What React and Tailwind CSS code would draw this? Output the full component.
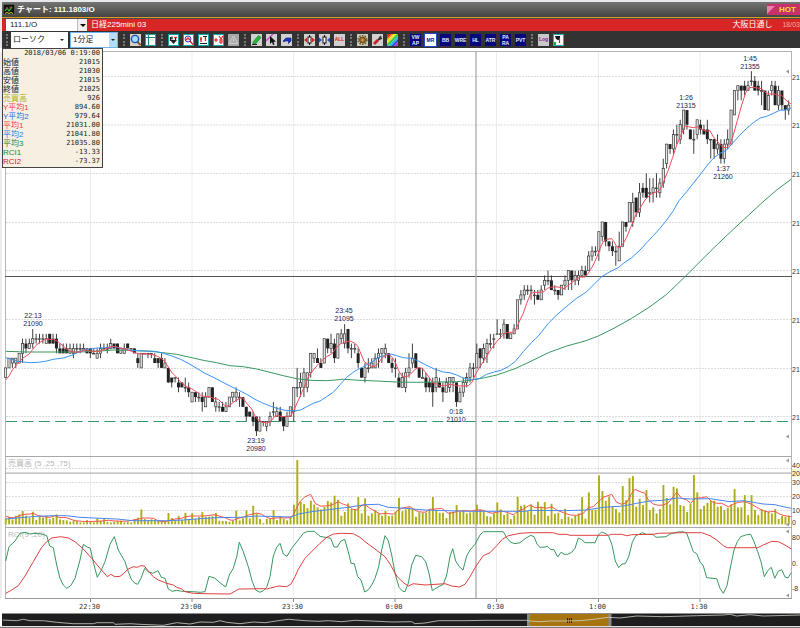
import React, { useState } from "react";
import clsx from "clsx";

// open high low close, one entry per minute, in ticks of 5 yen above 20980
const candles = `12 14 12 14,14 16 14 16,15 16 14 16,15 16 14 16,15 17 15 17,17 20 15 19,19 20 17 18,18 20 18 19,19 22 18 20,20 21 19 20,
20 21 19 20,20 21 19 20,19 21 19 20,21 21 19 19,20 21 19 19,20 21 17 18,18 19 17 17,18 19 17 17,18 19 17 17,17 19 17 18,
17 19 16 18,18 19 17 18,18 19 17 18,18 19 18 18,18 18 17 17,18 18 16 17,17 18 17 17,16 18 16 17,17 19 16 18,18 19 18 18,
18 19 17 18,18 20 18 19,19 19 18 18,19 19 17 17,17 18 17 18,17 19 17 18,19 19 18 18,18 18 18 18,18 18 17 17,16 17 14 15,
14 17 14 17,17 17 17 17,17 17 16 17,17 17 16 17,16 17 15 15,16 16 14 15,16 17 14 14,14 16 14 15,14 14 11 11,12 12 10 11,
12 12 11 12,11 12 9 10,11 11 10 10,10 12 9 10,10 11 8 9,7 9 7 9,9 9 7 8,8 9 7 8,8 9 5 7,6 9 6 8,
8 10 8 10,10 10 7 7,6 8 5 7,6 7 5 6,6 7 5 5,5 7 5 6,6 8 6 8,8 9 7 9,8 10 7 9,8 9 6 8,
8 8 6 6,6 6 3 4,5 5 4 4,4 5 2 3,4 4 0 1,1 4 1 3,3 3 2 3,2 3 1 3,3 5 2 4,5 7 4 5,
4 6 4 5,5 6 3 3,4 4 1 2,2 5 2 4,4 6 4 6,5 10 3 10,10 14 8 10,10 13 8 11,10 14 8 13,10 13 9 13,
13 17 12 17,16 17 15 17,16 18 15 15,15 16 14 14,15 20 15 20,20 20 17 18,18 21 17 19,19 20 15 16,16 21 16 21,20 22 19 21,
19 23 18 21,22 22 17 18,18 19 16 18,18 19 17 18,17 18 14 15,14 14 12 12,12 15 11 14,14 16 13 14,14 16 14 15,14 17 14 16,
16 18 14 17,17 18 15 18,17 19 16 18,17 17 15 15,15 16 13 14,14 16 12 14,12 13 10 10,10 13 10 12,10 14 9 13,13 17 12 14,
15 19 14 16,17 17 14 14,14 14 12 12,12 14 12 12,12 13 9 10,11 12 9 10,11 12 6 9,10 14 9 12,11 12 10 10,10 11 7 9,
9 12 9 11,10 12 9 12,11 12 9 12,11 11 6 7,7 10 7 9,9 12 8 11,11 13 10 12,12 15 11 14,14 15 12 14,14 19 14 17,
18 18 14 16,16 19 15 18,17 20 15 19,19 21 18 19,20 21 18 20,21 24 21 21,21 22 20 21,21 24 20 23,23 23 20 20,20 21 20 21,
21 23 21 22,22 28 22 28,28 30 27 29,29 31 28 30,30 31 29 30,30 31 28 30,29 30 27 29,29 30 28 28,28 31 28 30,31 33 30 32,
32 34 31 32,32 33 30 30,30 31 29 30,30 30 28 29,29 31 29 31,31 33 30 32,32 34 30 34,34 34 30 32,32 34 31 33,32 34 31 33,
33 35 33 34,34 35 33 33,34 38 34 37,37 39 36 38,38 39 37 38,38 42 36 42,41 44 40 44,44 44 39 40,40 40 38 39,39 40 37 38,
38 39 35 38,36 42 36 39,39 44 39 44,44 44 42 43,44 48 44 48,44 50 43 48,49 49 45 46,46 52 45 50,51 52 49 50,51 54 49 49,
50 53 48 50,50 53 48 51,51 54 49 51,50 53 49 52,52 57 51 55,56 60 55 60,60 60 58 59,59 63 58 62,62 64 60 62,61 65 60 64,
63 67 62 67,67 67 63 64,63 63 61 61,61 63 58 61,62 65 61 65,64 65 62 63,63 64 62 62,63 65 60 61,61 61 57 61,61 61 57 59,
59 62 58 60,60 61 56 57,57 61 56 60,60 63 59 61,60 67 60 67,66 71 66 71,71 72 69 72,72 72 69 71,72 73 70 71,71 73 71 72,
73 75 72 73,73 74 71 71,72 73 70 71,71 73 68 71,71 71 67 67,67 71 67 70,71 73 70 72,72 73 68 68,68 72 67 71,71 71 67 68,
68 68 65 67,67 69 66 68`
  .split(",")
  .map((row) => row.trim().split(" ").map(Number));

const volumes = [
  18, 23, 15, 26, 30, 40, 26, 20, 38, 13, 26, 20, 26, 16, 20, 30, 15, 13, 12, 8, 11, 10, 6, 6, 13, 9, 6, 18, 11, 16,
  8, 6, 8, 11, 11, 6, 8, 6, 15, 20, 45, 16, 13, 15, 12, 10, 10, 8, 34, 19, 12, 26, 13, 35, 16, 34, 16, 22, 37, 23,
  23, 24, 34, 11, 10, 10, 8, 11, 41, 12, 18, 42, 18, 56, 33, 16, 4, 17, 16, 43, 13, 24, 16, 12, 23, 59, 193, 68, 61, 49,
  71, 60, 51, 45, 53, 70, 66, 86, 74, 26, 37, 63, 46, 45, 82, 33, 78, 26, 33, 43, 33, 26, 40, 25, 26, 38, 80, 40, 45, 51,
  46, 23, 36, 35, 35, 43, 82, 43, 35, 35, 19, 37, 38, 58, 38, 41, 33, 36, 38, 59, 45, 38, 25, 23, 33, 66, 45, 28, 33, 16,
  27, 83, 56, 59, 40, 60, 29, 68, 53, 67, 26, 62, 32, 35, 16, 47, 23, 18, 26, 33, 82, 17, 96, 43, 44, 147, 100, 71, 84, 53,
  46, 36, 115, 73, 139, 145, 53, 77, 58, 103, 43, 51, 33, 46, 118, 79, 60, 113, 108, 58, 55, 37, 61, 148, 96, 46, 56, 65, 71, 71,
  53, 55, 43, 50, 60, 106, 51, 51, 88, 28, 88, 43, 28, 45, 41, 38, 33, 46, 16, 25, 23, 26,
];

// Line samples: [origin x, origin y, points], three steps to a pixel
const ma5 = [
  [0, 290, "17,270 27,258 37,240 48,227 58,215 68,205 78,198 88,192 98,178 108,166 118,158 128,152 138,147 150,148 160,149 170,152 180,160 190,168 200,178 212,184 225,187 240,185 255,180 270,183 285,184 300,184 315,177 330,171 345,169 360,174 375,177 390,182 405,188 420,192 435,191 450,193 463,195 475,200 490,210 503,228 515,247 530,262 545,280 560,290 575,296 590,306 605,318 618,320 630,321 645,326 655,328 668,341 678,349 690,345 705,333 720,325 728,323 740,340 755,357 765,378 775,390 785,396"],
  [230, 290, "110,399 122,395 133,380 145,376 155,380 170,379 182,378 192,360 203,335 215,308 225,285 238,255 250,240 262,226 275,212 290,200 305,192 315,178 330,162 345,156 360,153 372,158 383,168 393,192 403,215 413,222 425,229 435,229 445,220 455,205 465,197 475,193 485,200 497,220 508,246 518,260 530,260 542,252 553,240 563,233 575,234 585,245 598,263 608,278 620,282 630,287 645,287 660,283 670,285 680,287 700,288 715,287 725,278 738,250 750,230 765,207"],
  [460, 180, "95,505 110,485 125,468 135,459 145,457 160,457 168,448 180,420 190,400 200,370 212,340 225,337 240,337 252,335 262,325 272,322 285,320 300,322 312,326 322,318 335,308 350,297 360,291 375,291 385,280 400,255 412,228 420,205 430,185 440,178 455,176 462,185 470,200 478,203 487,195 500,172 512,142 525,110 540,85 555,60 570,45 580,38 595,35 605,20"],
  [600, 50, "193,390 205,360 218,322 230,285 245,250 255,228 265,230 280,233 292,230 305,238 318,243 330,242 340,260 350,272 360,283 368,292 380,293 390,283 400,255 412,212 425,165 437,128 448,113 460,112 470,114 480,115 490,120 500,131 512,132 525,132 535,136 545,136 555,148 565,156 573,162"],
];
const ma25 = [
  [0, 290, "17,203 35,208 50,213 70,216 90,218 115,217 140,213 160,208 190,204 215,196 240,184 265,178 290,174 315,173 340,170 365,175 385,180 410,182 440,183 465,184 490,190 515,198 540,207 565,220 590,235 615,250 640,262 665,275 690,288 715,300 740,313 765,328 785,338"],
  [230, 290, "118,347 140,355 165,361 190,363 212,360 230,350 250,340 270,333 290,320 310,307 330,284 350,262 375,243 400,230 425,216 450,200 470,194 485,193 500,197 520,203 545,205 565,213 590,226 615,238 640,246 660,248 680,255 700,264 720,268"],
  [460, 180, "48,598 60,595 80,583 100,577 125,570 145,560 165,545 190,515 215,487 235,468 265,430 290,405 325,375 350,355 380,335 400,315 425,290 450,275 475,263 490,250 515,233 540,210 560,188 580,167 600,145 620,120 640,92"],
  [600, 50, "237,452 260,425 280,400 300,375 320,348 340,325 360,310 380,300 400,277 420,255 440,235 460,218 480,204 500,199 520,190 540,181 555,180 573,174"],
];
const ma75 = [
  [0, 290, "17,184 80,186 240,186 300,183 340,180 380,181 410,182 450,184 490,188 530,193 570,202 610,211 650,218"],
  [230, 290, "0,227 40,230 80,237 120,247 160,257 200,266 240,271 290,272 340,268 390,271 440,273 500,276 560,277 620,276 680,275 720,271"],
  [460, 180, "70,594 110,585 165,566 210,545 265,518 320,498 375,483 415,468 465,443 515,415 570,380 620,343 675,290"],
  [600, 50, "300,635 350,585 400,538 495,450 530,420 573,388"],
];
const volumeFast = [
  [0, 450, "17,198 30,203 45,203 60,196 75,193 90,192 100,190 115,197 130,200 150,202 165,197 180,203 195,202 210,207 225,212 245,214 265,215 285,214 305,213 325,211 345,213 365,214 385,213 405,209 420,206 430,204 445,204 460,205 475,213 495,215 510,211 525,207 545,205 555,201 570,198 590,198 610,198 630,196 645,194 660,199 675,203 690,210 700,211 715,205 730,202 745,195 760,192 770,189 785,193"],
  [265, 450, "0,199 15,206 40,203 60,204 75,203 85,195 95,173 105,155 120,140 137,133 150,160 165,168 180,168 200,165 220,155 235,163 250,167 262,177 275,180 290,166 302,165 315,175 330,183 345,192 365,190 385,193 400,180 415,173 435,170 450,180 460,185 480,187 495,178 510,177 530,175 550,190 565,188 580,183 600,182 620,183 635,180 650,180 665,185 680,190 695,187 710,183 725,187 745,194 760,183 775,177"],
  [530, 450, "0,165 15,173 35,172 50,175 65,170 80,180 100,188 120,195 140,196 160,190 175,173 190,170 205,155 220,142 245,133 260,157 275,163 290,158 305,130 315,118 330,125 345,130 355,150 370,162 385,166 400,165 415,158 430,140 440,127 455,145 470,150 482,160 495,145 515,143 530,140 545,155 560,160 575,160 595,170 610,163 625,157 645,155 665,163 680,172 700,182 715,186 735,184 750,193 765,197 784,200"],
];
const volumeSlow = [
  [0, 450, "17,207 60,203 110,199 160,197 200,197 240,202 300,205 350,207 400,212 500,212 550,210 600,206 650,203 720,202 770,198"],
  [265, 450, "0,199 80,201 100,192 140,185 200,178 250,172 300,164 340,163 370,172 420,175 480,180 540,182 620,184 700,184 780,184"],
  [530, 450, "0,181 100,182 170,180 220,172 280,168 320,160 360,153 400,151 440,144 480,147 540,146 600,155 640,152 700,162 735,164 760,170 784,175"],
];
const rciFast = [
  [0, 450, "17,333 27,290 45,273 60,250 75,247 90,252 105,250 125,252 140,257 149,288 160,293 170,345 180,385 190,405 200,415 212,407 225,385 240,330 250,283 262,291 271,295 282,345 292,382 305,358 315,335 330,283 343,260 355,300 375,335 385,365 395,390 405,400 413,403 423,385 434,355 445,365 458,370 474,362 484,382 495,385 505,417 517,424 530,421 545,424 580,425 600,427 615,425 627,379 645,385 660,398 677,411 688,375 700,355 710,320 718,277 730,305 745,350 757,395 767,420 780,427 790,422"],
  [265, 450, "5,412 15,380 25,318 35,292 45,280 55,312 66,319 80,295 98,272 115,250 128,244 148,244 165,259 180,262 197,265 207,291 217,291 227,274 239,268 250,305 258,340 268,341 278,380 288,390 299,426 310,419 320,405 330,385 341,350 350,300 360,257 370,272 380,315 390,370 402,412 413,424 420,425 430,400 440,345 452,316 470,320 482,335 492,370 502,422 515,413 535,403 545,375 555,320 563,296 572,333 583,350 594,360 605,318 615,300 630,283 645,255 655,245 715,245 725,263 737,277 750,281 765,278 780,266 797,256"],
  [530, 450, "12,260 22,284 30,292 45,291 52,289 63,299 72,299 83,321 93,307 103,313 113,313 125,307 135,295 145,264 155,269 165,278 195,278 205,255 215,246 228,251 236,259 246,285 256,333 266,353 276,342 286,341 296,320 307,277 317,257 338,248 348,253 368,253 378,262 408,260 418,253 438,247 460,245 470,250 480,277 490,305 500,311 510,335 520,348 530,383 560,386 570,415 580,430 591,407 602,348 612,300 622,275 632,260 650,254 662,253 672,275 683,305 693,335 703,380 713,362 724,352 734,385 745,364 755,359 765,381 774,384 784,368"],
];
const rciSlow = [
  [0, 450, "17,430 30,423 55,407 75,378 100,335 125,292 140,275 155,264 182,260 205,264 225,275 250,297 275,325 300,355 322,380 332,373 345,380 360,379 370,372 383,358 400,350 412,352 422,347 433,348 445,363 460,380 475,390 500,400 520,405 530,412 545,417 555,425 580,430 615,431 690,432 717,417 790,416"],
  [265, 450, "5,417 40,408 65,410 78,402 90,380 100,358 120,325 145,300 165,280 185,262 205,252 230,250 265,251 285,262 300,275 330,297 360,320 375,342 395,378 415,398 430,408 445,401 480,405 540,401 560,408 583,411 600,403 615,380 635,345 655,317 675,308 695,287 712,268 730,257 765,250"],
  [530, 450, "0,248 70,248 85,253 110,253 120,256 235,256 245,253 275,253 290,257 305,254 370,253 385,250 460,248 515,248 540,257 560,270 580,287 592,293 683,293 700,285 725,274 745,275 765,285 784,297"],
];
const overview = [
  [0, 450, "8,510 50,512 70,508 90,512 130,512 170,517 220,521 280,521 290,518 340,518 345,523 390,521 420,523 490,526 530,518 570,522 600,516 640,517 660,512 680,517 720,521 760,516"],
  [265, 450, "0,518 20,515 40,512 70,508 120,512 160,514 190,512 230,515 270,511 320,513 380,516 440,515 450,521 480,519 520,512 600,512 660,511 785,511"],
  [530, 450, "0,513 30,515 60,513 100,513 150,512 190,508 235,502 270,504 320,498 400,500 500,497 580,495 600,493 620,498 660,494 700,498 810,495"],
];

const hours = [
  { x: 90.5, label: "22:30" },
  { x: 192, label: "23:00" },
  { x: 293.5, label: "23:30" },
  { x: 395, label: "0:00" },
  { x: 496.5, label: "0:30" },
  { x: 598.5, label: "1:00" },
  { x: 700, label: "1:30" },
];

const marks = [
  { x: 33, y: 318, time: "22:13", price: "21090" },
  { x: 344, y: 313, time: "23:45", price: "21095" },
  { x: 256, y: 443, time: "23:19", price: "20980" },
  { x: 456, y: 414, time: "0:18", price: "21010" },
  { x: 686, y: 100, time: "1:26", price: "21315" },
  { x: 723, y: 171, time: "1:37", price: "21260" },
  { x: 750, y: 61, time: "1:45", price: "21355" },
];

const quote = [
  { label: "始値", value: "21015", color: "text-[#222]" },
  { label: "高値", value: "21030", color: "text-[#222]" },
  { label: "安値", value: "21015", color: "text-[#222]" },
  { label: "終値", value: "21025", color: "text-[#222]" },
  { label: "売買高", value: "926", color: "text-[#b0b010]" },
  { label: "Y平均1", value: "894.60", color: "text-[#f03848]" },
  { label: "Y平均2", value: "979.64", color: "text-[#2868e8]" },
  { label: "平均1", value: "21031.00", color: "text-[#f03848]" },
  { label: "平均2", value: "21041.80", color: "text-[#2080e8]" },
  { label: "平均3", value: "21035.80", color: "text-[#208848]" },
  { label: "RCI1", value: "-13.33", color: "text-[#208848]" },
  { label: "RCI2", value: "-73.37", color: "text-[#d82020]" },
];

const candleX = (i) => 5.6 + i * 3.39;
const priceY = (tick) => 436 - tick * 4.865;

function Line({ data, color, width = 1 }) {
  const points = data
    .map(([ox, oy, list]) =>
      list
        .split(" ")
        .map((p) => {
          const [x, y] = p.split(",").map(Number);
          return `${(ox + x / 3).toFixed(1)},${(oy + y / 3).toFixed(1)}`;
        })
        .join(" ")
    )
    .join(" ");
  return <polyline points={points} fill="none" stroke={color} strokeWidth={width} strokeLinejoin="round" />;
}

function Frame({ top, bottom }) {
  return (
    <g>
      <rect x="0" y={top} width="2" height={bottom - top} fill="#ececee" />
      {hours.map((h) => (
        <line key={h.label} x1={h.x} x2={h.x} y1={top} y2={bottom} stroke="#ededed" />
      ))}
      <line x1="5.5" x2="5.5" y1={top} y2={bottom} stroke="#b4b4b4" />
      <line x1="791.5" x2="791.5" y1={top} y2={bottom} stroke="#b4b4b4" />
    </g>
  );
}

function Cursor({ top, bottom }) {
  return <line x1="476" x2="476" y1={top} y2={bottom} stroke="#aaa" strokeWidth="1.3" />;
}

function AxisText({ y, children }) {
  return (
    <text x="792" y={y} fontSize="7" fill="#333">
      {children}
    </text>
  );
}

function Pointer({ y }) {
  return <path d={`M786 ${y}l3 -2v4z`} fill="#999" />;
}

function PriceChart() {
  return (
    <svg viewBox="0 48 800 408" className="block w-full font-['Liberation_Sans',sans-serif]">
      <line x1="2" x2="792" y1="51.5" y2="51.5" stroke="#b4b4b4" />
      <Frame top={52} bottom={456} />
      {[76.5, 125, 173.5, 222.5, 270.5, 319.5, 368.5, 416.5].map((y) => (
        <g key={y}>
          <line x1="6" x2="791" y1={y} y2={y} stroke="#dcdcdc" strokeDasharray="2 1" />
          <AxisText y={y + 3}>21</AxisText>
        </g>
      ))}
      <line x1="6" x2="791" y1="421.5" y2="421.5" stroke="#2f9a68" strokeDasharray="11 5.4" />
      <line x1="5" x2="792" y1="276.5" y2="276.5" stroke="#555" strokeWidth="1.2" />
      <Cursor top={52} bottom={456} />
      {candles.map(([open, high, low, close], i) => {
        const x = candleX(i);
        const top = priceY(Math.max(open, close));
        const height = Math.max(Math.abs(open - close) * 4.865, 0.8);
        const down = close < open;
        return (
          <g key={i}>
            <line x1={x} x2={x} y1={priceY(high)} y2={priceY(low)} stroke="#2a2a2a" strokeWidth="0.9" />
            <rect
              x={x - (down ? 1.5 : 1.1)}
              y={top}
              width={down ? 3 : 2.2}
              height={height}
              fill={down ? "#222" : "#e4e4e4"}
              stroke={down ? "none" : "#3a3a3a"}
              strokeWidth="0.7"
            />
          </g>
        );
      })}
      <Line data={ma75} color="#38985f" />
      <Line data={ma25} color="#3a94f5" />
      <Line data={ma5} color="#f04a5c" />
      {marks.map((m) => (
        <g key={m.time} fontSize="7" fill="#1c1c58" textAnchor="middle">
          <text x={m.x} y={m.y}>{m.time}</text>
          <text x={m.x} y={m.y + 8}>{m.price}</text>
        </g>
      ))}
      <Pointer y={71.5} />
      <Pointer y={436.5} />
    </svg>
  );
}

function VolumeChart() {
  return (
    <svg viewBox="0 456 800 71" className="block w-full font-['Liberation_Sans','Noto_Sans_CJK_JP',sans-serif]">
      <Frame top={456} bottom={527} />
      {[468.5, 482.5, 496.5, 510.5].map((y) => (
        <line key={y} x1="6" x2="791" y1={y} y2={y} stroke="#dcdcdc" strokeDasharray="2 1" />
      ))}
      <line x1="5" x2="792" y1="456.5" y2="456.5" stroke="#a8a8a8" />
      <line x1="5" x2="792" y1="473.2" y2="473.2" stroke="#b4b4b4" strokeWidth="1.2" />
      <Cursor top={456} bottom={527} />
      {volumes.map((v, i) => (
        <rect key={i} x={candleX(i) - 0.8} y={524.4 - v / 3} width="1.9" height={v / 3} fill="#adad18" />
      ))}
      <Line data={volumeFast} color="#f4564c" />
      <Line data={volumeSlow} color="#4a86f0" />
      <text x="8" y="466" fontSize="8" fill="#b8b8b8">売買高 (5 ,25 ,75)</text>
      <rect x="792" y="469" width="8" height="8" fill="#fbf8cc" />
      <AxisText y={468}>40</AxisText>
      <AxisText y={476}>20</AxisText>
      <AxisText y={485}>30</AxisText>
      <AxisText y={499}>20</AxisText>
      <AxisText y={513}>10</AxisText>
      <AxisText y={525}>0</AxisText>
      <Pointer y={460.5} />
      <Pointer y={524.5} />
    </svg>
  );
}

function RciChart() {
  return (
    <svg viewBox="0 527 800 71" className="block w-full font-['Liberation_Sans',sans-serif]">
      <Frame top={527} bottom={598} />
      <line x1="5" x2="792" y1="527.5" y2="527.5" stroke="#a8a8a8" />
      <Cursor top={528} bottom={598} />
      <text x="8" y="537" fontSize="8" fill="#b8b8b8">RCI(9 ,20)</text>
      <Line data={rciFast} color="#38985f" />
      <Line data={rciSlow} color="#e04040" />
      <AxisText y={540}>80</AxisText>
      <AxisText y={566}>0.</AxisText>
      <AxisText y={591}>-8</AxisText>
      <Pointer y={531.5} />
      <Pointer y={595.5} />
    </svg>
  );
}

function TimeAxis() {
  return (
    <svg viewBox="0 598 800 15" className="block w-full font-['DejaVu_Sans_Mono',monospace]">
      <line x1="5" x2="792" y1="598.5" y2="598.5" stroke="#999" />
      {hours.map((h) => (
        <g key={h.label}>
          <line x1={h.x} x2={h.x} y1="599" y2="602" stroke="#888" />
          <text x={h.x - 1} y="609" fontSize="7" fill="#333" textAnchor="middle">{h.label}</text>
        </g>
      ))}
    </svg>
  );
}

function Overview() {
  return (
    <svg viewBox="0 613 800 13" className="block w-full">
      <rect x="2" y="613.5" width="798" height="12.5" fill="#1e1e1e" />
      <rect x="529" y="614" width="80" height="12" fill="#a87410" />
      <rect x="527" y="613.5" width="3" height="12.5" fill="#888" />
      <rect x="608.5" y="613.5" width="3" height="12.5" fill="#888" />
      <path d="M567.5 618v5M569.5 618v5M571.5 618v5" stroke="#222" />
      <Line data={overview} color="#d0d0c8" width={0.8} />
    </svg>
  );
}

const Grip = () => (
  <span className="flex w-3 justify-center">
    <span className="h-3 border-l-2 border-dotted border-[#777]" />
  </span>
);

function Tool({ name, children, className }) {
  return (
    <button type="button" aria-label={name} className={clsx("h-3 w-[11px] shrink-0 overflow-hidden", className)}>
      <svg viewBox="0 0 11 12" className="h-full w-full">{children}</svg>
    </button>
  );
}

function TextTool({ lines, active }) {
  return (
    <button
      type="button"
      className={clsx(
        "flex h-3 w-[11px] shrink-0 flex-col items-center justify-center text-[5px] leading-[6px] font-bold",
        active ? "bg-white text-[#101080] outline outline-[#2848c8]" : "bg-[#08087c] text-[#e0e8ff]"
      )}
    >
      {lines.map((l) => (
        <span key={l}>{l}</span>
      ))}
    </button>
  );
}

function Toolbar() {
  const [style, setStyle] = useState("ローソク");
  const [span, setSpan] = useState("1分足");

  return (
    <div className="flex h-[17px] items-center bg-[#333]">
      <span className="flex w-[9px] justify-center">
        <span className="h-3 border-l-2 border-dotted border-[#777]" />
      </span>
      <div className="relative flex h-4 w-[57px] items-center bg-white">
        <select
          aria-label="チャート種類"
          value={style}
          onChange={(e) => setStyle(e.target.value)}
          className="w-full appearance-none pl-0.5 text-[8px] leading-3 text-[#222]"
        >
          <option>ローソク</option>
        </select>
        <span className="pointer-events-none absolute right-1 border-x-2 border-t-2 border-x-transparent border-t-[#222]" />
      </div>
      <div className="relative ml-0.5 flex h-4 w-[48px] items-center border border-[#78b4e8] bg-white">
        <select
          aria-label="足種"
          value={span}
          onChange={(e) => setSpan(e.target.value)}
          className="w-full appearance-none pl-0.5 text-[8px] leading-3 text-[#222]"
        >
          <option>1分足</option>
        </select>
        <span className="pointer-events-none absolute inset-y-0 right-0 flex w-2 items-center justify-center bg-[#b8dcf8]">
          <span className="border-x-2 border-t-2 border-x-transparent border-t-[#222]" />
        </span>
      </div>

      <Grip />
      <div className="flex gap-1">
        <Tool name="拡大" className="bg-[#d8d0c0]">
          <path d="M7 7.500l3.500 3.500" stroke="#805028" strokeWidth="1.8" />
          <circle cx="5" cy="5" r="3.6" fill="#a8dcff" stroke="#1050c8" strokeWidth="1.4" />
        </Tool>
        <Tool name="一覧" className="bg-[#20a0a0]">
          <rect x="1" y="1" width="9" height="10" fill="#fff" />
          <path d="M1 3.5h9M3.5 1v10" stroke="#208080" strokeWidth="1.2" />
          <path d="M5 6h4" stroke="#ccc" />
        </Tool>
      </div>
      <Grip />
      <div className="flex gap-1">
        <Tool name="注文" className="bg-[#18a8a8]">
          <rect x="1" y="1" width="9" height="10" fill="#fff" />
          <path d="M2.500 3v4M4 2.500v3M7.500 3v3" stroke="#222" strokeWidth="1.3" />
          <path d="M2 6h7L5.500 10z" fill="#222" />
          <path d="M6 3.500h3" stroke="#e02020" strokeWidth="1.2" />
        </Tool>
        <Tool name="検索" className="bg-[#18a8a8]">
          <rect x="1" y="1" width="9" height="10" fill="#fff" />
          <circle cx="5" cy="5" r="3" fill="#fbd8e0" stroke="#4040c0" />
          <path d="M3 6l2-2 2 2M7 7l3 3.500" stroke="#d82020" strokeWidth="1.2" fill="none" />
        </Tool>
        <Tool name="比較" className="bg-[#18a8a8]">
          <rect x="1" y="1" width="9" height="10" fill="#fff" />
          <path d="M3 3v5M2 5h2M7.500 3v4" stroke="#e02020" strokeWidth="1.3" />
          <path d="M2 9.5h7M5 2.500h4" stroke="#222" />
        </Tool>
        <Tool name="通貨" className="bg-[#18a8a8]">
          <rect x="1" y="1" width="9" height="10" fill="#fff" />
          <path d="M1 6h4M3 4v4M6 2l2 3 2-3M8 5v5M6 6h4M6 8h4" stroke="#e02020" strokeWidth="1.1" fill="none" />
        </Tool>
        <Tool name="アラート" className="bg-[#a8a8a8]">
          <path d="M5.5 2L9.5 9.5h-8zM5.5 5v2.500" stroke="#d0d0d0" fill="none" />
        </Tool>
      </div>
      <Grip />
      <div className="flex gap-1">
        <Tool name="ペン" className="bg-[#d0d0d0]">
          <path d="M2 8L7.500 1.500l2.500 2L5 9.500l-3 .5z" fill="#28b838" stroke="#107020" strokeWidth="0.6" />
          <path d="M1 10.500h5" stroke="#222" />
        </Tool>
        <Tool name="選択" className="bg-[#d0d0d0]">
          <path d="M0 7L7 0" stroke="#d040d0" strokeWidth="1.3" />
          <path d="M4 2v8l2-2 1 3 1.500-.6-1-2.700h2.500z" fill="#111" />
        </Tool>
        <Tool name="消去" className="bg-[#d0d0d0]">
          <path d="M2 7l3-3h5v3L7.500 9.500V7H4L3 8z" fill="#1838c8" stroke="#101860" strokeWidth="0.6" />
        </Tool>
      </div>
      <Grip />
      <div className="flex gap-1">
        <Tool name="幅を広げる" className="bg-[#d0d0d0]">
          <rect x="4" y="3" width="3" height="6" fill="#fff" stroke="#111" />
          <path d="M5.500 1v2M5.500 9v2" stroke="#111" />
          <path d="M0 6l3-2.500v5zM11 6L8 3.500v5z" fill="#e02020" />
        </Tool>
        <Tool name="幅を狭める" className="bg-[#d0d0d0]">
          <rect x="4" y="3" width="3" height="6" fill="#fff" stroke="#111" />
          <path d="M5.500 1v2M5.500 9v2" stroke="#111" />
          <path d="M3 6L0 3.500v5zM8 6l3-2.500v5z" fill="#2848e0" />
        </Tool>
        <button type="button" className="flex h-3 w-[11px] items-center justify-center bg-[#d0d0d0] text-[5px] font-bold text-[#d82020]">
          ALL
        </button>
      </div>
      <Grip />
      <div className="flex gap-1">
        <Tool name="設定" className="bg-[#c8c8c0]">
          <circle cx="5.5" cy="6" r="3" fill="#a07028" stroke="#604010" strokeWidth="1" />
          <circle cx="5.5" cy="6" r="4.4" fill="none" stroke="#705018" strokeWidth="1.4" strokeDasharray="1.6 1.2" />
          <circle cx="5.5" cy="6" r="0.8" fill="#e0d0a0" />
        </Tool>
        <Tool name="ツール" className="bg-[#d0d0d0]">
          <path d="M2 10l4-4" stroke="#d02020" strokeWidth="3" />
          <path d="M6 6l3-4M6 6l4-2" stroke="#333" strokeWidth="1.4" />
        </Tool>
        <Tool name="配色" className="bg-white">
          <path d="M0 0h5L0 5z" fill="#e83020" />
          <path d="M5 0h2L0 7V5z" fill="#f0a020" />
          <path d="M7 0h3L0 10V7z" fill="#f0e820" />
          <path d="M10 0h1v2L1 12H0v-2z" fill="#38c838" />
          <path d="M11 2v3l-7 7H1z" fill="#28b8e0" />
          <path d="M11 5v3l-4 4H4z" fill="#3048e0" />
          <path d="M11 8v4H7z" fill="#b038d0" />
        </Tool>
      </div>
      <Grip />
      <div className="flex gap-1">
        <TextTool lines={["VW", "AP"]} />
        <TextTool lines={["MR"]} active />
        <TextTool lines={["BB"]} />
        <TextTool lines={["WRE"]} />
        <TextTool lines={["HL"]} />
        <TextTool lines={["ATR"]} />
        <TextTool lines={["PA", "RA"]} />
        <TextTool lines={["PVT"]} />
      </div>
      <Grip />
      <div className="flex gap-1">
        <button type="button" className="flex h-3 w-[11px] items-center justify-center bg-[#c8c8c8] text-[5px] font-bold text-[#802090]">
          Log
        </button>
        <Tool name="反転" className="bg-[#18b8b8]">
          <rect x="1" y="1" width="9" height="10" fill="#fff" />
          <path d="M2 2h5v4H5L3 5z" fill="#111" />
          <path d="M6.500 4v5" stroke="#e02020" strokeWidth="1.2" />
          <path d="M1 8h2v3H1z" fill="#28a038" />
        </Tool>
      </div>
    </div>
  );
}

function QuotePanel() {
  return (
    <div className="absolute top-0 left-0.5 w-[101px] border border-[#444] bg-[#f6f0e2] pb-px font-['DejaVu_Sans_Mono','Noto_Sans_CJK_JP',monospace] text-[7px] leading-[9px] text-[#222]">
      <p className="pr-0.5 text-right">2018/03/06 0:19:00</p>
      <table className="w-full border-collapse">
        <tbody>
          {quote.map((q) => (
            <tr key={q.label}>
              <th
                scope="row"
                className={clsx(
                  "p-0 text-left font-['Liberation_Sans','Noto_Sans_CJK_JP',sans-serif] text-[8px] leading-[9px] font-normal",
                  q.color
                )}
              >
                {q.label}
              </th>
              <td className="p-0 pr-0.5 text-right">{q.value}</td>
            </tr>
          ))}
        </tbody>
      </table>
    </div>
  );
}

function App() {
  const [code, setCode] = useState("111.1/O");

  return (
    <div className="w-full overflow-hidden bg-white font-['Liberation_Sans','Noto_Sans_CJK_JP',sans-serif]">
      <div className="border-t-2 border-l-2 border-[#e6e8ec]">
        {/* Title bar */}
        <header className="flex h-[15px] items-center bg-linear-to-b from-[#747472] to-[#444442]">
          <svg viewBox="0 0 12 11" className="ml-px h-[11px] w-3">
            <rect width="12" height="11" fill="#111" stroke="#888" />
            <path d="M2 7l2-3 2 3 3-4" stroke="#20b838" strokeWidth="1.3" fill="none" />
            <path d="M7 2v3M4 3v2" stroke="#e02020" />
            <path d="M2 9.500l2-1 2 1 2-1 2 1" stroke="#e0d020" fill="none" />
          </svg>
          <h1 className="ml-0.5 text-[8px] font-bold text-white">チャート: 111.1803/O</h1>
          <div className="ml-auto flex h-[11px] w-[33px] items-center bg-[#c8306c]">
            <svg viewBox="0 0 8 8" className="h-2 w-2">
              <path d="M0 0h8L0 8z" fill="#e884a8" />
            </svg>
            <span className="ml-1 text-[8px] font-bold text-[#f4e020]">HOT</span>
          </div>
        </header>
        <div className="h-px bg-[#d89c28]" />
        <div className="h-px bg-[#504844]" />

        {/* Instrument bar */}
        <div className="flex h-3 items-center bg-[#d82626] pl-1 text-[8px] leading-3 text-white">
          <div className="relative flex h-3 w-[81px] items-center bg-white">
            <select
              aria-label="銘柄コード"
              value={code}
              onChange={(e) => setCode(e.target.value)}
              className="w-full appearance-none pl-1 text-[#222]"
            >
              <option>111.1/O</option>
            </select>
            <span className="pointer-events-none absolute inset-y-0 right-0 flex w-[10px] items-center justify-center border-l border-[#bbb] bg-[#f0f0f0]">
              <span className="border-x-[3px] border-t-[3px] border-x-transparent border-t-black" />
            </span>
          </div>
          <span className="ml-1">日経225mini 03</span>
          <span className="ml-auto">大阪日通し</span>
          <span className="ml-2.5 text-[7px] text-[#f4a8a0]">18/03</span>
        </div>

        <Toolbar />
      </div>

      <main className="relative">
        <PriceChart />
        <VolumeChart />
        <RciChart />
        <TimeAxis />
        <Overview />
        <div className="h-0.5 border-t border-[#e0e0e0] bg-[#777]" />
        <QuotePanel />
      </main>
    </div>
  );
}

export default App;
